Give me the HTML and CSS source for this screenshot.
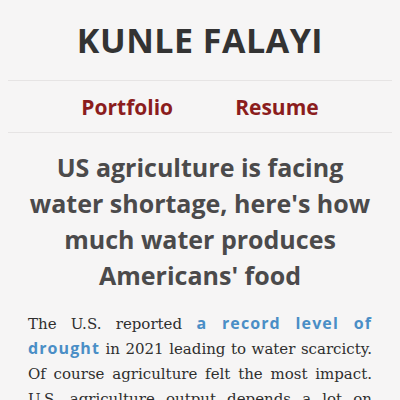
FILE: index.html
```html
<!DOCTYPE html>
<html>
<head>
<meta charset="utf-8">
<link rel="stylesheet" href="styles.css">
</head>
<body>
<header class="site-header">
  <h1 class="site-title">KUNLE FALAYI</h1>
  <nav class="nav">
    <a class="nav-link" href="#">Portfolio</a>
    <a class="nav-link" href="#">Resume</a>
  </nav>
</header>
<article class="post">
  <h2 class="post-title">US agriculture is facing water shortage, here's how much water produces Americans' food</h2>
  <p class="post-body">The U.S. reported <a class="inline-link" href="#">a record level of drought</a> in 2021 leading to water scarcicty. Of course agriculture felt the most impact. U.S. agriculture output depends a lot on water, and the dry conditions have made farmers rethink their plans.</p>
</article>
</body>
</html>
```
FILE: styles.css
```css
html, body {
  margin: 0;
  padding: 0;
  background: #f6f5f5;
}
body {
  padding: 0 8px;
  font-family: "Open Sans", sans-serif;
}
.site-header {
  display: flex;
  flex-direction: column;
}
.site-title {
  margin: 0;
  height: 80px;
  display: flex;
  align-items: center;
  justify-content: center;
  font-size: 34px;
  font-weight: 700;
  color: #333333;
  border-bottom: 1px solid #e6e4e4;
  letter-spacing: 0.5px;
}
.nav {
  display: flex;
  justify-content: center;
  gap: 62px;
  height: 51px;
  align-items: center;
  border-bottom: 1px solid #e6e4e4;
}
.nav-link {
  font-size: 21px;
  font-weight: 700;
  color: #8b1d1d;
  text-decoration: none;
}
.post {
  padding: 0 20px;
}
.post-title {
  margin: 16px 0 0;
  text-align: center;
  font-size: 25px;
  line-height: 36px;
  font-weight: 700;
  color: #4b4a4b;
}
.post-body {
  margin: 19px 0 0;
  font-family: "DejaVu Serif", serif;
  font-size: 15px;
  line-height: 25px;
  text-align: justify;
  color: #2e2e2e;
}
.inline-link {
  font-family: "Open Sans", sans-serif;
  font-size: 16px;
  line-height: 1;
  font-weight: 700;
  color: #4a8ec6;
  text-decoration: none;
  letter-spacing: 1.1px;
}
```
